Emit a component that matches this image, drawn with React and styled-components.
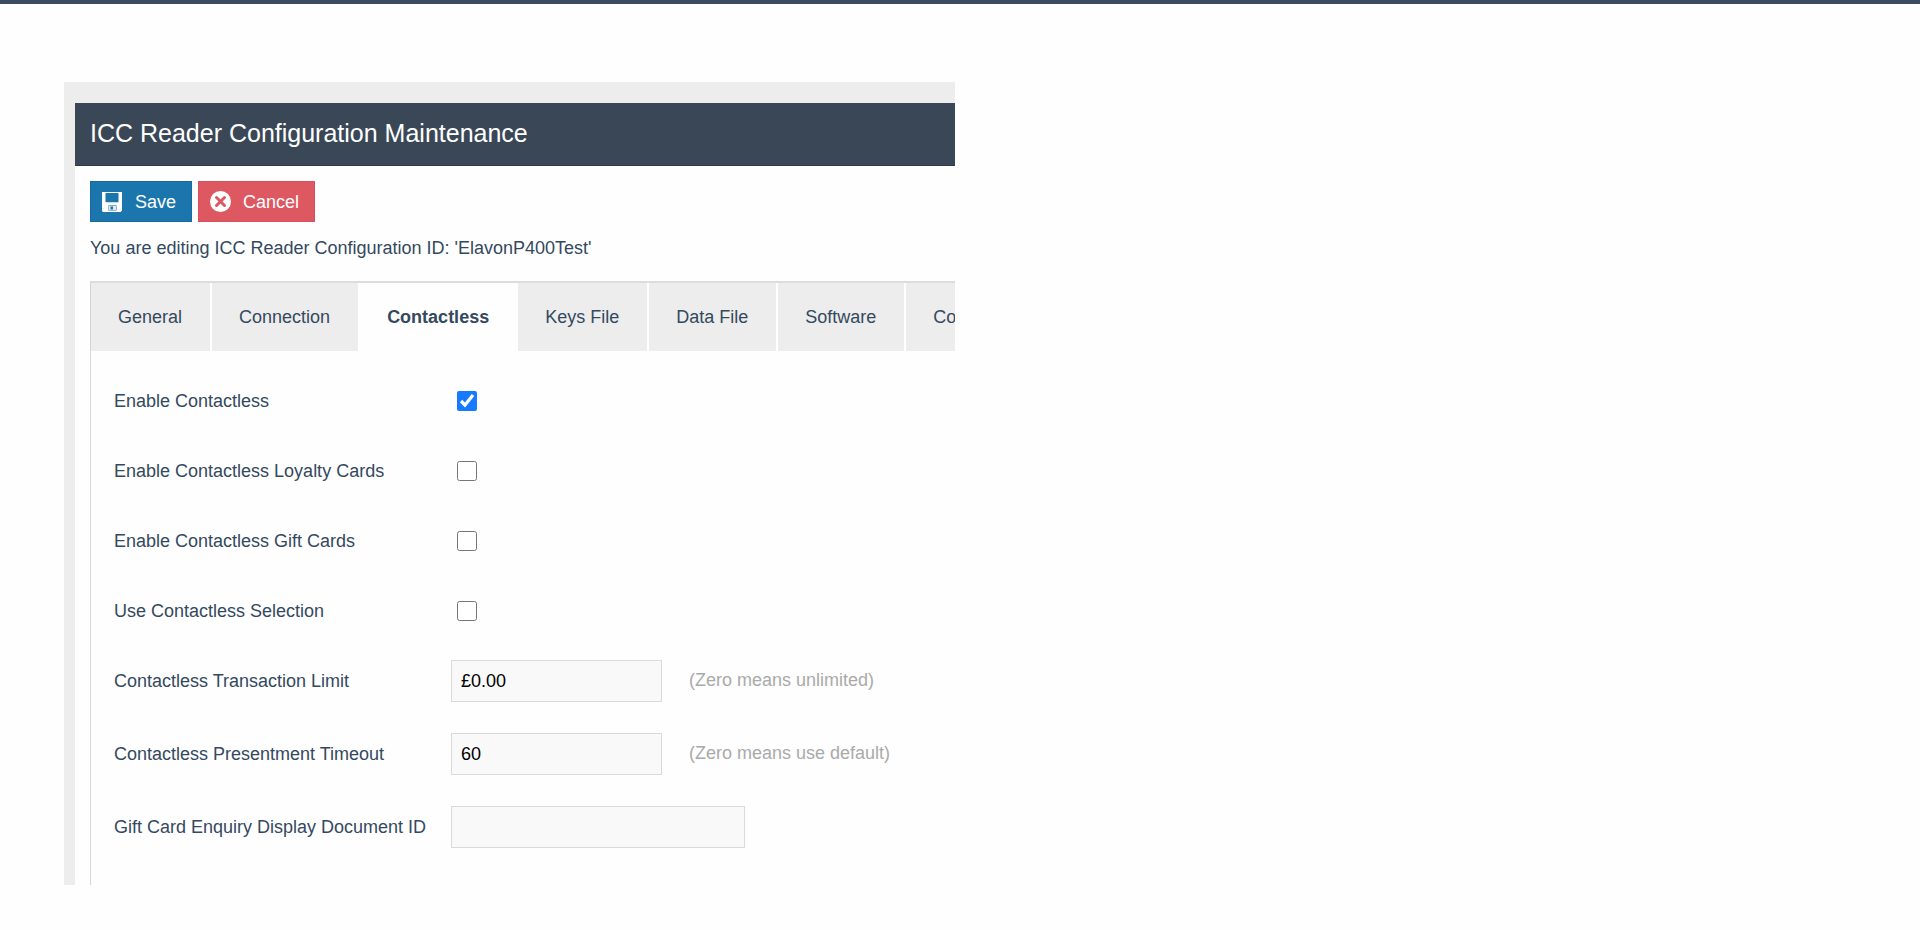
import { useState } from 'react'
import styled, { createGlobalStyle } from 'styled-components'

const GlobalStyle = createGlobalStyle`
    * {
        box-sizing: border-box;
    }
    body {
        margin: 0;
        background: #fefefe;
        color: #34495e;
        font-family: 'Liberation Sans', Arial, sans-serif;
        font-size: 18px;
        line-height: 24px;
    }
    button, input {
        font: inherit;
    }
`

const Page = styled.div`
    display: grid;
    grid-template-columns: 1fr 1fr;
    border-top: 4px solid #3a4b5e;
    padding: 78px 0 45px;
`

const Panel = styled.main`
    min-width: 0;
    margin: 0 5px 0 64px;
    padding: 21px 0 0 11px;
    background: #ededed;
    overflow: hidden;
`

const Title = styled.h1`
    margin: 0;
    padding: 15px 15px 17px;
    border-bottom: 1px solid #2c3a4b;
    background: #3a4757;
    color: #ffffff;
    font-size: 25px;
    font-weight: 400;
    line-height: 30px;
`

const Content = styled.div`
    padding: 15px 0 0 15px;
    background: #fefefe;
`

const Toolbar = styled.div`
    display: flex;
    gap: 6px;
`

const ToolButton = styled.button`
    display: flex;
    align-items: center;
    gap: 12px;
    height: 41px;
    padding: 0 15px 0 11px;
    border: 1px solid ${(props) => props.$edge};
    background: ${(props) => props.$color};
    color: #ffffff;
    cursor: pointer;
`

const Notice = styled.p`
    margin: 14px 0 21px;
`

const TabBox = styled.div`
    border-top: 2px solid #dddddd;
    border-left: 1px solid #d5d5d5;
`

const TabList = styled.div`
    display: flex;
    gap: 2px;
`

const Tab = styled.button`
    flex: none;
    height: 68px;
    padding: ${(props) => (props.$active ? '0 27px' : '0 28px 0 27px')};
    border: 0;
    background: ${(props) => (props.$active ? '#fefefe' : '#ededed')};
    color: #34495e;
    font-weight: ${(props) => (props.$active ? 700 : 400)};
    cursor: pointer;
`

const Form = styled.form`
    padding: 14px 0 21px 23px;
`

const Row = styled.div`
    display: grid;
    grid-template-columns: 337px 1fr;
    align-items: center;
    padding: ${(props) => (props.$check ? '26px 0 24px' : '15px 0 16px')};
`

const Label = styled.label`
    line-height: 20px;
`

const Field = styled.div`
    display: flex;
    align-items: center;
    gap: 27px;
`

const Checkbox = styled.input`
    width: 20px;
    height: 20px;
    margin: 0 0 0 6px;
    accent-color: #157aff;
`

const TextInput = styled.input`
    width: ${(props) => (props.$wide ? '294px' : '211px')};
    height: 42px;
    padding: 0 9px;
    border: 1px solid #dadada;
    border-radius: 0;
    background: #f9f9f9;
    color: #000000;
`

const Hint = styled.span`
    padding-bottom: 2px;
    color: #aaaaaa;
`

const tabs = ['General', 'Connection', 'Contactless', 'Keys File', 'Data File', 'Software', 'Co']

const checks = [
    { id: 'contactless', label: 'Enable Contactless', on: true },
    { id: 'loyalty', label: 'Enable Contactless Loyalty Cards' },
    { id: 'gift', label: 'Enable Contactless Gift Cards' },
    { id: 'selection', label: 'Use Contactless Selection' },
]

const fields = [
    { id: 'limit', label: 'Contactless Transaction Limit', value: '£0.00', hint: '(Zero means unlimited)' },
    { id: 'timeout', label: 'Contactless Presentment Timeout', value: '60', hint: '(Zero means use default)' },
    { id: 'document', label: 'Gift Card Enquiry Display Document ID', value: '', wide: true },
]

function SaveIcon() {
    return (
        <svg width='21' height='20' viewBox='0 0 21 20' aria-hidden='true'>
            <path
                fill='#ffffff'
                fillRule='evenodd'
                d='M0 0h20v18.5L18.500 20H1L0 19zM3.500 1v9.200h13V1zM6.500 13.200v5.200h8v-5.200z'
            />
            <path fill='#ffffff' fillRule='evenodd' d='M7 13.700h7v4.300H7zM8.500 14.500v3h2.500v-3z' opacity='0.85' />
        </svg>
    )
}

function CancelIcon() {
    return (
        <svg width='21' height='21' viewBox='0 0 21 21' aria-hidden='true'>
            <circle cx='10.5' cy='10.5' r='10.5' fill='#ffffff' />
            <path d='M6.500 6.500l8 8M14.500 6.500l-8 8' stroke='#de5862' strokeWidth='3' strokeLinecap='round' />
        </svg>
    )
}

function App() {
    const [active, setActive] = useState('Contactless')

    return (
        <>
            <GlobalStyle />
            <Page>
                <Panel>
                    <Title>ICC Reader Configuration Maintenance</Title>
                    <Content>
                        <Toolbar>
                            <ToolButton type='button' $color='#1b76ad' $edge='#166a9e'>
                                <SaveIcon />
                                Save
                            </ToolButton>
                            <ToolButton type='button' $color='#de5862' $edge='#d9505b'>
                                <CancelIcon />
                                Cancel
                            </ToolButton>
                        </Toolbar>
                        <Notice>You are editing ICC Reader Configuration ID: 'ElavonP400Test'</Notice>
                        <TabBox>
                            <TabList role='tablist'>
                                {tabs.map((name) => (
                                    <Tab
                                        key={name}
                                        type='button'
                                        role='tab'
                                        aria-selected={name === active}
                                        $active={name === active}
                                        onClick={() => setActive(name)}
                                    >
                                        {name}
                                    </Tab>
                                ))}
                            </TabList>
                            <Form>
                                {checks.map((item) => (
                                    <Row key={item.id} $check>
                                        <Label htmlFor={item.id}>{item.label}</Label>
                                        <Field>
                                            <Checkbox type='checkbox' id={item.id} defaultChecked={item.on} />
                                        </Field>
                                    </Row>
                                ))}
                                {fields.map((item) => (
                                    <Row key={item.id}>
                                        <Label htmlFor={item.id}>{item.label}</Label>
                                        <Field>
                                            <TextInput type='text' id={item.id} defaultValue={item.value} $wide={item.wide} />
                                            {item.hint && <Hint>{item.hint}</Hint>}
                                        </Field>
                                    </Row>
                                ))}
                            </Form>
                        </TabBox>
                    </Content>
                </Panel>
            </Page>
        </>
    )
}

export default App
